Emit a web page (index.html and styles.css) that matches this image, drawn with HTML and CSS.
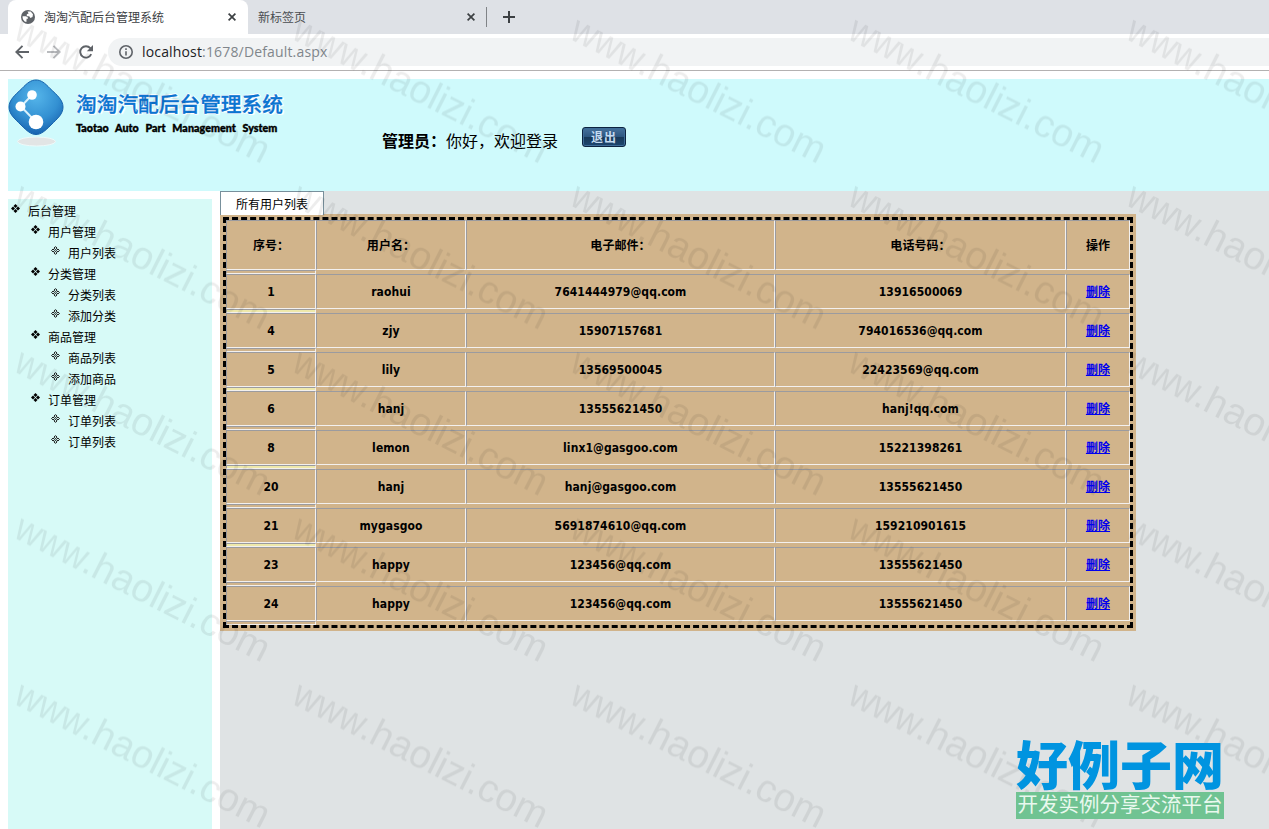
FILE: index.html
```
<!DOCTYPE html>
<html lang="zh-CN">

<head>
    <meta charset="UTF-8">
    <title>淘淘汽配后台管理系统</title>
    <link rel="stylesheet" href="styles.css">
</head>

<body>
    <div class="tabs">
        <div class="tab active">
            <svg class="globe" width="14" height="14" viewBox="0 0 14 14"><circle cx="7" cy="7" r="7" fill="#5f6368"/><path d="M1.600 6.200h3.300l2 1.300v1.300H5.600l-.2 3.300C3 11.600 1.300 9 1.600 6.200zM6.500 1.400h3.200l2.300 2.800-.5 2.800-2.100 1L8.200 6.300H5.800V4.200l1.800-.7z" fill="#fff"/></svg>
            <span>淘淘汽配后台管理系统</span>
            <svg class="close" width="8" height="8" viewBox="0 0 8 8"><path d="M.6.6l6.800 6.800M7.400.6L.6 7.400"/></svg>
        </div>
        <div class="tab">
            <span>新标签页</span>
            <svg class="close" width="8" height="8" viewBox="0 0 8 8"><path d="M.6.6l6.800 6.800M7.400.6L.6 7.400"/></svg>
        </div>
        <svg class="plus" width="12" height="12" viewBox="0 0 12 12"><path d="M6 0v12M0 6h12"/></svg>
    </div>
    <div class="toolbar">
        <svg width="14" height="14" viewBox="0 0 14 14"><path d="M14 7H1.500M7.500.8L1.300 7l6.200 6.200"/></svg>
        <svg class="off" width="14" height="14" viewBox="0 0 14 14"><path d="M0 7h12.500M6.500.8L12.700 7l-6.200 6.200"/></svg>
        <svg width="14" height="14" viewBox="0 0 14 14"><path d="M12.200 9.200A5.700 5.700 0 1 1 11.300 3.200L12.500 4.400"/><path d="M14 0v6.200H7.800z" class="tip"/></svg>
        <div class="address">
            <svg width="14" height="14" viewBox="0 0 14 14"><circle cx="7" cy="7" r="6.200"/><path d="M7 6.200v4.400M7 3.300v1.600"/></svg>
            <p>localhost<span>:1678/Default.aspx</span></p>
        </div>
    </div>

    <header>
        <svg class="logo" width="58" height="70" viewBox="0 0 58 70">
            <defs>
                <radialGradient id="blue" cx=".5" cy=".3" r=".7">
                    <stop offset="0" stop-color="#55b5ea"/>
                    <stop offset=".6" stop-color="#3390d2"/>
                    <stop offset="1" stop-color="#1763b0"/>
                </radialGradient>
            </defs>
            <ellipse cx="28.500" cy="62.500" rx="19" ry="4.500" fill="#e2e5e5" stroke="#eefafa"/>
            <path d="M28 1C33 1 37 4 42 9.500C49 16 55 21 55 28S50 39 43 46C37 52 33 55.500 28 55.500S19 52 13 46C6 39 1 35 1 28S7 16 14 9.500C19 4 23 1 28 1z" fill="url(#blue)" stroke="#1763ac"/>
            <path d="M24 16L13 27.500L28 43" fill="none" stroke="#d9f1fc" stroke-width="2"/>
            <circle cx="24" cy="16" r="4.800" fill="#fff"/>
            <circle cx="12.500" cy="27.500" r="5" fill="#fff"/>
            <circle cx="28" cy="43" r="7.300" fill="#fff"/>
        </svg>
        <div class="brand">
            <h1>淘淘汽配后台管理系统</h1>
            <h2>Taotao Auto Part Management System</h2>
        </div>
        <p class="welcome"><b>管理员：</b>你好，欢迎登录</p>
        <button>退出</button>
    </header>

    <main>
        <nav>
            <svg class="defs" width="0" height="0">
                <symbol id="dot" viewBox="0 0 9 9"><path d="M4.500 0l2 2-2 2-2-2zM4.500 5l2 2-2 2-2-2zM2 2.500l2 2-2 2-2-2zM7 2.500l2 2-2 2-2-2z"/></symbol>
                <symbol id="ring" viewBox="0 0 9 9"><path d="M4.500.6l1.500 1.500-1.500 1.500L3 2.100zM4.500 5.400L6 6.900 4.500 8.400 3 6.900zM2.100 3l1.500 1.500L2.100 6 .6 4.500zM6.900 3l1.500 1.500L6.900 6 5.400 4.500z"/></symbol>
            </svg>
            <ul>
                <li><svg><use href="#dot"/></svg>后台管理
                    <ul>
                        <li><svg><use href="#dot"/></svg>用户管理
                            <ul>
                                <li><svg class="ring"><use href="#ring"/></svg>用户列表</li>
                            </ul>
                        </li>
                        <li><svg><use href="#dot"/></svg>分类管理
                            <ul>
                                <li><svg class="ring"><use href="#ring"/></svg>分类列表</li>
                                <li><svg class="ring"><use href="#ring"/></svg>添加分类</li>
                            </ul>
                        </li>
                        <li><svg><use href="#dot"/></svg>商品管理
                            <ul>
                                <li><svg class="ring"><use href="#ring"/></svg>商品列表</li>
                                <li><svg class="ring"><use href="#ring"/></svg>添加商品</li>
                            </ul>
                        </li>
                        <li><svg><use href="#dot"/></svg>订单管理
                            <ul>
                                <li><svg class="ring"><use href="#ring"/></svg>订单列表</li>
                                <li><svg class="ring"><use href="#ring"/></svg>订单列表</li>
                            </ul>
                        </li>
                    </ul>
                </li>
            </ul>
        </nav>

        <section>
            <div class="caption">所有用户列表</div>
            <div class="list">
                <table>
                    <colgroup><col class="c1"><col class="c2"><col class="c3"><col class="c4"><col class="c5"></colgroup>
                    <tr class="head"><th>序号：</th><th>用户名：</th><th>电子邮件：</th><th>电话号码：</th><th>操作</th></tr>
                    <tr class="gap"><td></td></tr>
                    <tr><td>1</td><td>raohui</td><td>7641444979@qq.com</td><td>13916500069</td><td><a href="#">删除</a></td></tr>
                    <tr class="gap alt"><td></td></tr>
                    <tr><td>4</td><td>zjy</td><td>15907157681</td><td>794016536@qq.com</td><td><a href="#">删除</a></td></tr>
                    <tr class="gap"><td></td></tr>
                    <tr><td>5</td><td>lily</td><td>13569500045</td><td>22423569@qq.com</td><td><a href="#">删除</a></td></tr>
                    <tr class="gap alt"><td></td></tr>
                    <tr><td>6</td><td>hanj</td><td>13555621450</td><td>hanj!qq.com</td><td><a href="#">删除</a></td></tr>
                    <tr class="gap"><td></td></tr>
                    <tr><td>8</td><td>lemon</td><td>linx1@gasgoo.com</td><td>15221398261</td><td><a href="#">删除</a></td></tr>
                    <tr class="gap alt"><td></td></tr>
                    <tr><td>20</td><td>hanj</td><td>hanj@gasgoo.com</td><td>13555621450</td><td><a href="#">删除</a></td></tr>
                    <tr class="gap"><td></td></tr>
                    <tr><td>21</td><td>mygasgoo</td><td>5691874610@qq.com</td><td>159210901615</td><td><a href="#">删除</a></td></tr>
                    <tr class="gap alt"><td></td></tr>
                    <tr><td>23</td><td>happy</td><td>123456@qq.com</td><td>13555621450</td><td><a href="#">删除</a></td></tr>
                    <tr class="gap"><td></td></tr>
                    <tr><td>24</td><td>happy</td><td>123456@qq.com</td><td>13555621450</td><td><a href="#">删除</a></td></tr>
                    <tr class="gap"><td></td></tr>
                </table>
            </div>
        </section>
    </main>

    <svg class="watermark" width="1269" height="829">
        <defs>
            <pattern id="mark" x="6" y="8" width="278" height="166.200" patternUnits="userSpaceOnUse">
                <g transform="translate(6 30) rotate(26.800)">
                    <text x="0" textLength="77" lengthAdjust="spacingAndGlyphs">www</text>
                    <text x="76" textLength="204">.haolizi.com</text>
                </g>
            </pattern>
        </defs>
        <rect width="1269" height="829" fill="url(#mark)"/>
    </svg>

    <div class="stamp">
        <strong>好例子网</strong>
        <span>开发实例分享交流平台</span>
    </div>
</body>

</html>
```
FILE: styles.css
```
* {
    box-sizing: border-box;
}

body {
    margin: 0;
    width: 1269px;
    height: 829px;
    overflow: hidden;
    position: relative;
    display: flex;
    flex-direction: column;
    background: white;
    color: black;
    font-family: "Liberation Sans", "Noto Sans CJK SC", sans-serif;
    font-size: 12px;
}

h1, h2, p, ul {
    margin: 0;
    padding: 0;
}

svg {
    display: block;
    flex: none;
}

.tabs {
    height: 34px;
    padding-left: 8px;
    display: flex;
    align-items: center;
    background: #dee1e6;
}

.tab {
    height: 34px;
    width: 238px;
    display: flex;
    align-items: center;
    padding: 0 11px 0 10px;
    color: #4a4d51;
}

.tab span {
    flex: 1;
    padding-bottom: 2px;
}

.tab.active {
    width: 240px;
    padding: 0 12px 0 13px;
    background: white;
    border-radius: 8px 8px 0 0;
    color: #3c4043;
}

.globe {
    margin-right: 9px;
}

.close, .plus {
    stroke: #3c4043;
    stroke-width: 1.7;
    fill: none;
}

.plus {
    margin-left: 17px;
    stroke-width: 2;
}

.tab:nth-child(2)::after {
    content: "";
    width: 1px;
    height: 20px;
    margin: 0 -12px 0 11px;
    background: #808387;
}

.toolbar {
    height: 37px;
    border-bottom: 1px solid #b3b1b1;
    padding-left: 15px;
    display: flex;
    align-items: center;
    gap: 18px;
}

.toolbar svg {
    fill: none;
    stroke: #5f6368;
    stroke-width: 1.9;
}

.toolbar .off {
    stroke: #b9bbbe;
}

.toolbar .tip {
    fill: #5f6368;
    stroke: none;
}

.address {
    flex: 1;
    height: 28px;
    margin-left: -3px;
    padding-left: 11px;
    display: flex;
    align-items: center;
    background: #f1f3f4;
    border-radius: 14px 0 0 14px;
}

.address svg {
    stroke-width: 1.6;
}

.address p {
    margin-left: 9px;
    padding-bottom: 2px;
    font-family: "Open Sans", sans-serif;
    font-size: 14px;
    letter-spacing: 0.16px;
    color: #202124;
}

.address span {
    color: #80868b;
}

header {
    height: 112px;
    margin: 8px 0 0 8px;
    display: flex;
    align-items: flex-start;
    background: #cffafc;
}

.brand {
    width: 228px;
    margin: 10px 0 0 10px;
}

.brand h1 {
    font-size: 20.7px;
    line-height: 32px;
    font-weight: 500;
    color: #0b74d1;
    text-shadow: 1px 0 white, -1px 0 white, 0 1px white, 0 -1px white, 2px 1px 1px white;
    -webkit-text-stroke: 0.3px #0b74d1;
    white-space: nowrap;
}

.brand h2 {
    margin-top: -1px;
    font-family: Lato, sans-serif;
    font-size: 10.7px;
    font-weight: 900;
    line-height: 16px;
    word-spacing: 4px;
    letter-spacing: 0.05px;
    white-space: nowrap;
    -webkit-text-stroke: 0.4px black;
}

.welcome {
    margin: 51px 0 0 78px;
    width: 200px;
    font-size: 16px;
    line-height: 24px;
    white-space: nowrap;
}

header button {
    width: 44px;
    height: 20px;
    margin-top: 48px;
    padding: 0;
    border: 1px solid #0c2340;
    border-radius: 3px;
    background: linear-gradient(#46719c, #2c557f 50%, #173858 52%, #1d4670);
    box-shadow: inset 0 0 0 1px #3e6c98;
    color: #c3daf0;
    font: bold 12px/16px "Noto Sans CJK SC", sans-serif;
    letter-spacing: 1px;
}

main {
    flex: 1;
    display: flex;
    margin-left: 8px;
}

nav {
    width: 204px;
    margin-top: 8px;
    padding-top: 3px;
    background: #d7faf7;
}

nav ul {
    list-style: none;
    line-height: 21px;
}

nav ul ul {
    padding-left: 20px;
}

nav li svg {
    float: left;
    width: 9px;
    height: 9px;
    margin: 2px 8px 0 3px;
    fill: black;
}

nav li .ring {
    fill: none;
    stroke: #111;
    stroke-width: 1;
}

section {
    flex: 1;
    margin-left: 8px;
    background: #dfe3e4;
}

.caption {
    position: relative;
    width: 104px;
    height: 24px;
    border: 1px solid #78909c;
    border-bottom: 0;
    background: white;
    line-height: 27px;
    text-align: center;
}

.list {
    width: 916px;
    height: 417px;
    margin-top: -1px;
    padding: 3px;
    background: #d1b48b;
}

table {
    width: 910px;
    table-layout: fixed;
    border: 3px dashed black;
    border-spacing: 0;
    font: bold 12px "DejaVu Sans Condensed", "Noto Sans CJK SC", sans-serif;
    letter-spacing: 0.08px;
}

.c1 { width: 90px; }
.c2 { width: 150px; }
.c3 { width: 309px; }
.c4 { width: 291px; }
.c5 { width: 64px; }

th, td {
    height: 35px;
    padding: 0;
    border: 1px solid;
    border-color: #9b9b9f #f3f0ee #f3f0ee #9b9b9f;
    text-align: center;
    line-height: 16px;
}

th {
    height: 50px;
    padding-top: 2px;
    font-weight: 600;
}

td a {
    color: #0000ee;
    font-weight: 600;
}

.gap td {
    height: 4px;
    line-height: 0;
}

.alt td {
    background: #eee8aa;
}

.watermark {
    position: absolute;
    left: 0;
    top: 0;
    pointer-events: none;
}

.watermark text {
    font-family: "Liberation Sans", sans-serif;
    font-size: 39px;
    fill: rgba(0, 0, 0, 0.07);
}

.stamp {
    position: absolute;
    left: 1016px;
    top: 736px;
    width: 208px;
}

.stamp strong {
    display: block;
    height: 56px;
    font-family: "Noto Sans CJK SC", sans-serif;
    font-size: 52px;
    font-weight: 900;
    line-height: 54px;
    color: #0094e0;
    white-space: nowrap;
}

.stamp span {
    display: block;
    height: 27px;
    background: #70c392;
    color: #e9f8ee;
    font-size: 20.5px;
    line-height: 26px;
    text-align: center;
    white-space: nowrap;
}
```
